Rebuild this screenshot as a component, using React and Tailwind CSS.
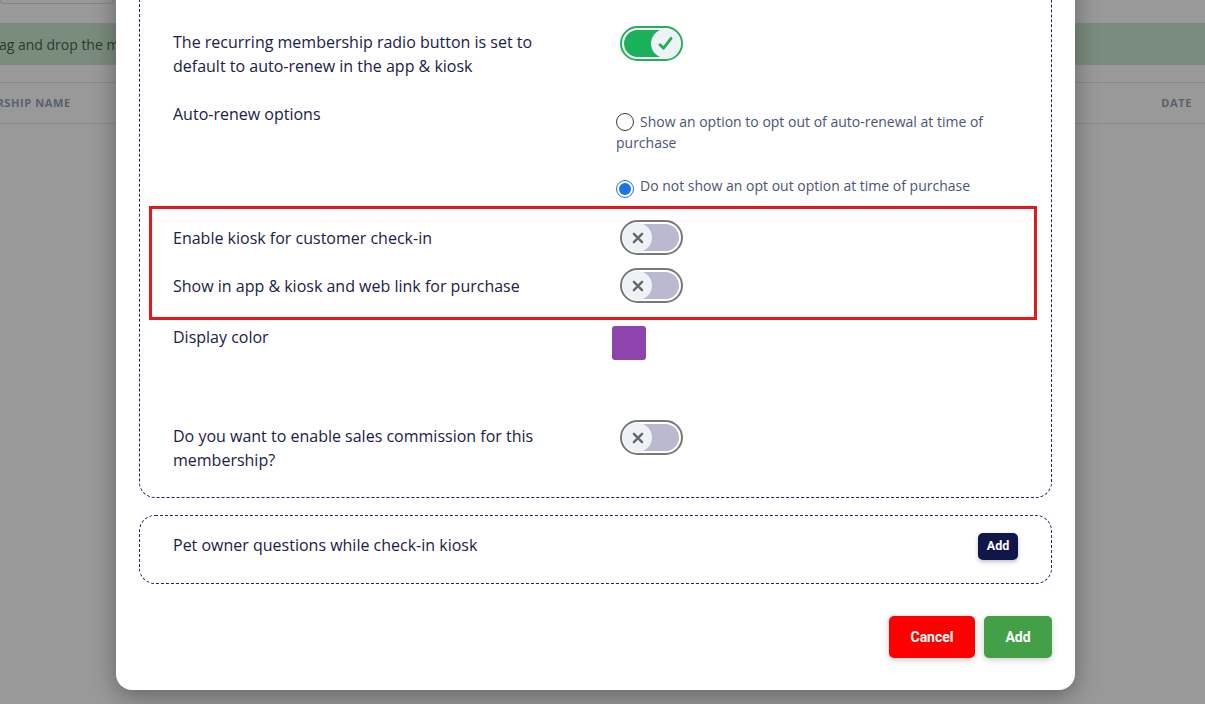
import React from 'react';

const font = { fontFamily: '"Open Sans", "Liberation Sans", sans-serif' };
const roboto = { fontFamily: 'Roboto, "Liberation Sans", sans-serif' };

const Toggle = ({ on }) => (
  <span
    className={`inline-flex h-[35px] w-[63px] shrink-0 rounded-full border-2 bg-white p-[2px] ${
      on ? 'border-[#1fb25a]' : 'border-[#787878]'
    }`}
  >
    <span
      className={`flex h-full w-full items-center rounded-full ${
        on ? 'justify-end bg-[#1bb15a]' : 'justify-start bg-[#bbb9cf]'
      }`}
    >
      <span className="-m-[1px] flex h-[29px] w-[29px] items-center justify-center rounded-full bg-[#eef2f7]">
        {on ? (
          <svg width="19" height="19" viewBox="0 0 24 24" fill="none" stroke="#1eae5a" strokeWidth="3.6" strokeLinecap="round" strokeLinejoin="round">
            <path d="M5 13.5l4.5 4.5L19 5.5" />
          </svg>
        ) : (
          <svg width="14" height="14" viewBox="0 0 24 24" fill="none" stroke="#686868" strokeWidth="4.2" strokeLinecap="round">
            <path d="M5 5l14 14M19 5L5 19" />
          </svg>
        )}
      </span>
    </span>
  </span>
);

const Radio = ({ checked }) =>
  checked ? (
    <span className="relative top-[4px] mr-[6px] inline-flex h-[18px] w-[18px] items-center justify-center rounded-full border-[1.5px] border-[#1a73e8] bg-white align-baseline">
      <span className="h-[12px] w-[12px] rounded-full bg-[#1a73e8]" />
    </span>
  ) : (
    <span className="relative top-[4px] mr-[6px] inline-block h-[18px] w-[18px] rounded-full border border-[#3a3a3a] bg-white align-baseline" />
  );

const Label = ({ children, className = '' }) => (
  <div className={`w-[439px] shrink-0 pr-[39px] text-[16px] leading-[24px] font-medium text-[#1b2148] ${className}`}>
    {children}
  </div>
);

export default function App() {
  return (
    <div className="relative h-[704px] w-[1205px] overflow-hidden bg-white" style={font}>
      {/* page behind the modal */}
      <div className="flex flex-col">
        <div className="h-[4px] w-[114px] rounded-b-[6px] border border-t-0 border-[#dddddd]" />
        <div className="mt-[19px] flex h-[42px] items-center bg-[#cbe9d2] text-[14px] text-[#3d6b47]">
          <span className="-ml-[17px] whitespace-nowrap">Drag and drop the membership to change the display order</span>
        </div>
        <div className="mt-[17px] flex h-[42px] items-center justify-between border-y border-[#e6e6e6] text-[11px] font-bold tracking-[0.6px] text-[#94a1b5]">
          <span className="-ml-[47px]">MEMBERSHIP NAME</span>
          <span className="mr-[13px]">DATE</span>
        </div>
      </div>
      <div className="absolute inset-0 bg-black/40" />

      {/* modal */}
      <div className="absolute left-[116px] top-[-40px] w-[959px] rounded-[16px] bg-white px-[23px] pt-[20px] pb-[32px] shadow-[0_6px_24px_rgba(0,0,0,0.35)]">
        <div className="rounded-[16px] border border-dashed border-[#1c2566] pl-[33px] pr-[33px] pt-[45px] pb-[25px]">
          <div className="flex items-start">
            <Label className="pt-[4px]">
              The recurring membership radio button is set to default to auto-renew in the app &amp; kiosk
            </Label>
            <div className="pl-[8px]">
              <Toggle on />
            </div>
          </div>

          <div className="mt-[24px] flex items-start">
            <Label>Auto-renew options</Label>
            <div className="flex-1 pt-[7px] pl-[4px] text-[14px] leading-[21px] text-[#4b5479]">
              <p>
                <Radio />
                Show an option to opt out of auto-renewal at time of purchase
              </p>
              <p className="mt-[22px]">
                <Radio checked />
                Do not show an opt out option at time of purchase
              </p>
            </div>
          </div>

          <div className="mt-[10px] -ml-[24px] -mr-[19px] border-[3px] border-[#e3191f] pl-[21px] pt-[11px] pb-[14px]">
            <div className="flex items-center">
              <Label>Enable kiosk for customer check-in</Label>
              <div className="pl-[8px]">
                <Toggle />
              </div>
            </div>
            <div className="mt-[13px] flex items-center">
              <Label>Show in app &amp; kiosk and web link for purchase</Label>
              <div className="pl-[8px]">
                <Toggle />
              </div>
            </div>
          </div>

          <div className="mt-[5px] flex items-start">
            <Label>Display color</Label>
            <div className="mt-[1px] h-[34px] w-[34px] rounded-[3px] bg-[#8e44ad]" />
          </div>

          <div className="mt-[60px] flex items-start">
            <Label className="pt-[4px]">Do you want to enable sales commission for this membership?</Label>
            <div className="pl-[8px]">
              <Toggle />
            </div>
          </div>
        </div>

        <div className="mt-[17px] flex items-start justify-between rounded-[16px] border border-dashed border-[#1c2566] pl-[33px] pr-[33px] pt-[17px] pb-[23px]">
          <span className="text-[16px] leading-[24px] font-medium text-[#1b2148]">Pet owner questions while check-in kiosk</span>
          <button
            className="flex h-[27px] w-[40px] items-center justify-center rounded-[5px] bg-[#11164a] text-[12.5px] font-bold text-white shadow-[0_2px_4px_rgba(0,0,0,0.25)]"
            style={roboto}
          >
            Add
          </button>
        </div>

        <div className="mt-[32px] flex justify-end gap-[9px]" style={roboto}>
          <button className="h-[42px] w-[86px] rounded-[5px] bg-[#ff0000] text-[14px] font-bold text-white shadow-[0_2px_6px_rgba(0,0,0,0.2)]">
            Cancel
          </button>
          <button className="h-[42px] w-[68px] rounded-[5px] bg-[#43a047] text-[14px] font-bold text-white shadow-[0_2px_6px_rgba(0,0,0,0.2)]">
            Add
          </button>
        </div>
      </div>
    </div>
  );
}
